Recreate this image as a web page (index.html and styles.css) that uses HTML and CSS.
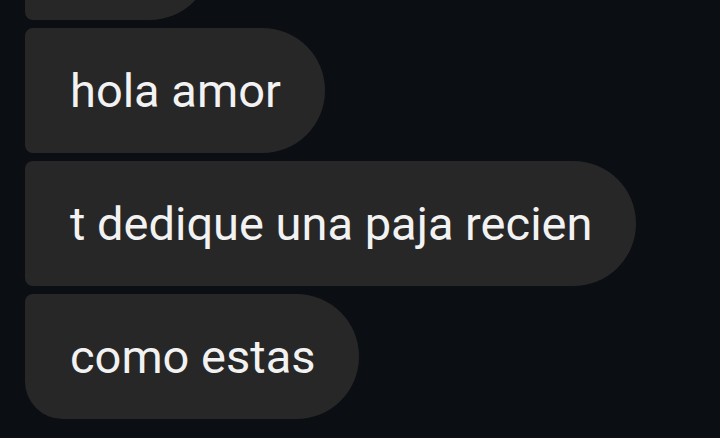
FILE: index.html
```html
<!DOCTYPE html>
<html lang="es">
<head>
<meta charset="utf-8">
<link rel="stylesheet" href="styles.css">
</head>
<body>
<div class="thread">
  <div class="bubble bubble--cut"></div>
  <div class="bubble">hola amor</div>
  <div class="bubble">t dedique una paja recien</div>
  <div class="bubble bubble--last">como estas</div>
</div>
</body>
</html>
```
FILE: styles.css
```css
html, body {
  margin: 0;
  padding: 0;
  background: #0b0e13;
  height: 100%;
  overflow: hidden;
}
.thread {
  display: flex;
  flex-direction: column;
  align-items: flex-start;
  gap: 8px;
  padding-left: 25px;
  margin-top: -105px;
}
.bubble {
  box-sizing: border-box;
  height: 125px;
  display: flex;
  align-items: center;
  padding: 0 44px 0 45px;
  background: #272727;
  color: #f2f2f2;
  font-family: Roboto, "Noto Sans", sans-serif;
  font-size: 47px;
  border-radius: 8px 63px 63px 8px;
  white-space: nowrap;
}
.bubble--cut {
  width: 187px;
}
.bubble--last {
  border-bottom-left-radius: 38px;
}
```
